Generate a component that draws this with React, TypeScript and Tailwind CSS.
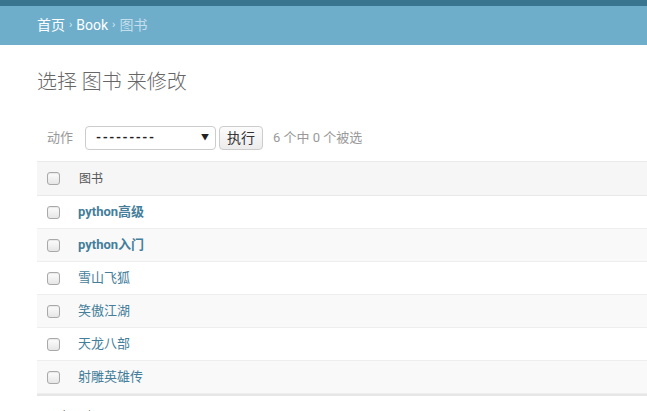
import React from 'react';

const books = [
  { title: 'python高级', bold: true },
  { title: 'python入门', bold: true },
  { title: '雪山飞狐', bold: false },
  { title: '笑傲江湖', bold: false },
  { title: '天龙八部', bold: false },
  { title: '射雕英雄传', bold: false },
];

function Checkbox() {
  return (
    <span className="inline-block size-[13px] rounded-[3px] border border-[#a9a9a9] bg-gradient-to-b from-[#fdfdfd] to-[#e6e6e6] shadow-[inset_0_1px_1px_rgba(0,0,0,0.08)]" />
  );
}

export default function App() {
  return (
    <div
      className="w-[647px] h-[411px] overflow-hidden bg-white text-[#333]"
      style={{ fontFamily: "Roboto, 'Noto Sans CJK SC', sans-serif" }}
    >
      {/* Header strip */}
      <div className="h-[6px] bg-[#3a7590]" />

      {/* Breadcrumbs */}
      <div className="h-[39px] bg-[#6eaecb] pl-[37px] flex items-center text-[14px] text-white">
        <span>首页</span>
        <span className="mx-[4px] text-[11px] text-[#d8ebf3]">›</span>
        <span>Book</span>
        <span className="mx-[4px] text-[11px] text-[#d8ebf3]">›</span>
        <span className="text-[#c4dfeb]">图书</span>
      </div>

      {/* Content */}
      <div className="pl-[37px]">
        <h1 className="mt-[23px] text-[20px] font-light text-[#666] leading-[28px]">选择 图书 来修改</h1>

        {/* Actions */}
        <div className="mt-[30px] flex items-center h-[24px] text-[13px]">
          <span className="ml-[10px] text-[#999]">动作</span>
          <div className="ml-[12px] w-[131px] h-[24px] flex items-center justify-between rounded-[4px] border border-[#ccc] bg-white pl-[10px] pr-[6px]">
            <span className="text-[#222] font-bold tracking-[1.5px]">---------</span>
            <span className="text-[8px] text-[#222]">▼</span>
          </div>
          <button className="ml-[3px] h-[24px] w-[44px] rounded-[4px] border border-[#ccc] bg-gradient-to-b from-[#fcfcfc] to-[#ececec] text-[14px] text-[#333]">
            执行
          </button>
          <span className="ml-[10px] text-[#999]">6 个中 0 个被选</span>
        </div>

        {/* Table */}
        <div className="mt-[11px] w-[700px]">
          <div className="h-[35px] flex items-center bg-[#f6f6f6] border-t border-b border-[#eaeaea]">
            <div className="w-[42px] flex pl-[10px]">
              <Checkbox />
            </div>
            <span className="text-[12px] text-[#555]">图书</span>
          </div>
          {books.map((b, i) => (
            <div
              key={b.title}
              className={`h-[33px] flex items-center border-b border-[#eee] ${i % 2 === 1 ? 'bg-[#f9f9f9]' : 'bg-white'}`}
            >
              <div className="w-[41px] flex pl-[10px]">
                <Checkbox />
              </div>
              <a className={`text-[13px] text-[#447e9b] ${b.bold ? 'font-bold' : ''}`}>{b.title}</a>
            </div>
          ))}
          <div className="h-[2px] bg-[#e6e6e6]" />
          <div className="pt-[11px] pl-[10px] text-[13px] text-[#666]">6 个图书</div>
        </div>
      </div>
    </div>
  );
}
